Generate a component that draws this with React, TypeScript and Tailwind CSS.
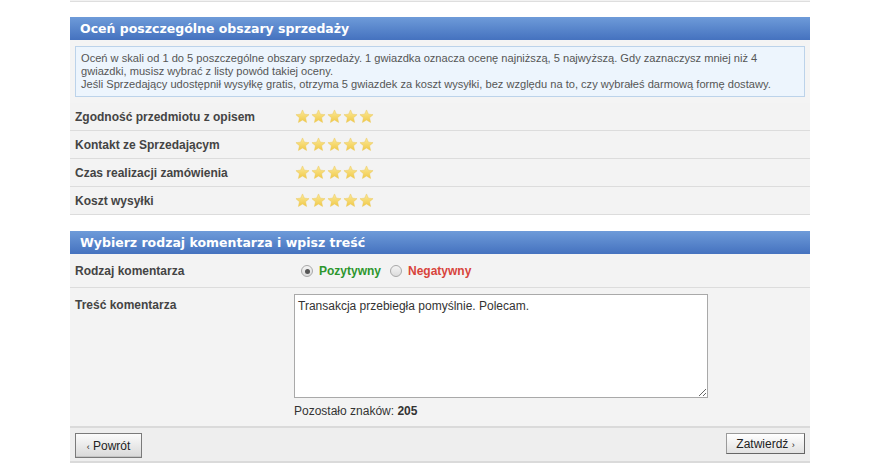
import React from 'react';

const criteria = [
  'Zgodność przedmiotu z opisem',
  'Kontakt ze Sprzedającym',
  'Czas realizacji zamówienia',
  'Koszt wysyłki',
];

function Star() {
  return (
    <svg width="15" height="15" viewBox="0 0 24 24" className="shrink-0">
      <defs>
        <linearGradient id="sg" x1="0" y1="0" x2="0" y2="1">
          <stop offset="0" stopColor="#fce99a" />
          <stop offset="1" stopColor="#f0c947" />
        </linearGradient>
      </defs>
      <polygon
        points="12,1.5 15.1,8.3 22.5,9 16.9,14 18.5,21.5 12,17.6 5.5,21.5 7.1,14 1.5,9 8.9,8.3"
        fill="url(#sg)"
        stroke="#ebc95a"
        strokeWidth="0.8"
      />
    </svg>
  );
}

function SectionHeader({ title }: { title: string }) {
  return (
    <div className="h-[23px] flex items-center px-[10px] pt-[1px] bg-gradient-to-b from-[#6e9bd9] to-[#4572bf] text-white font-bold text-[12.5px] [font-family:'DejaVu_Sans',Verdana,sans-serif]">
      {title}
    </div>
  );
}

function Radio({ checked, className = '' }: { checked?: boolean; className?: string }) {
  return (
    <span
      className={`inline-flex h-[12px] w-[12px] items-center justify-center rounded-full border border-[#a8a8a8] bg-gradient-to-b from-[#f4f4f4] to-[#dcdcdc] ${className}`}
    >
      {checked && <span className="h-[5px] w-[5px] rounded-full bg-[#555]" />}
    </span>
  );
}

export default function App() {
  return (
    <div className="min-h-[470px] bg-white [font-family:'Liberation_Sans',Arial,sans-serif]">
      <div className="w-[740px] ml-[70px]">
        <div className="h-[2px] bg-[#f2f2f2] border-b border-[#dedede]" />

        <div className="mt-[15px]">
          <SectionHeader title="Oceń poszczególne obszary sprzedaży" />
          <div className="bg-[#f4f4f4] px-[5px] py-[6px]">
            <div className="border border-[#bcd3ea] bg-[#edf5fd] px-[5px] py-[5px] text-[11.1px] leading-[13px] text-[#555]">
              Oceń w skali od 1 do 5 poszczególne obszary sprzedaży. 1 gwiazdka oznacza ocenę najniższą, 5 najwyższą. Gdy zaznaczysz mniej niż 4 gwiazdki, musisz wybrać z listy powód takiej oceny.
              <br />
              Jeśli Sprzedający udostępnił wysyłkę gratis, otrzyma 5 gwiazdek za koszt wysyłki, bez względu na to, czy wybrałeś darmową formę dostawy.
            </div>
          </div>
          {criteria.map((c) => (
            <div key={c} className="flex h-[28px] items-center border-b border-[#dcdcdc] bg-[#f3f3f3] pl-[5px]">
              <div className="w-[220px] text-[12px] font-bold text-[#444]">{c}</div>
              <div className="flex gap-[1px]">
                {[0, 1, 2, 3, 4].map((i) => (
                  <Star key={i} />
                ))}
              </div>
            </div>
          ))}
        </div>

        <div className="mt-[16px]">
          <SectionHeader title="Wybierz rodzaj komentarza i wpisz treść" />
          <div className="flex h-[34px] border-b border-[#dcdcdc] bg-[#f3f3f3] pl-[5px] pt-[8px]">
            <div className="w-[219px] text-[12px] font-bold text-[#444]">Rodzaj komentarza</div>
            <div className="flex items-center pl-[7px] pt-[2px] h-[16px] text-[12px] font-bold">
              <Radio checked />
              <span className="ml-[6px] text-[#2d962d]">Pozytywny</span>
              <Radio className="ml-[9px]" />
              <span className="ml-[6px] text-[#d8443b]">Negatywny</span>
            </div>
          </div>
          <div className="flex bg-[#f3f3f3] pl-[5px] pt-[6px] pb-[6px]">
            <div className="w-[219px] pt-[2px] text-[12px] font-bold text-[#444]">Treść komentarza</div>
            <div>
              <textarea
                className="block h-[104px] w-[414px] resize-y border border-[#a9a9a9] bg-white px-[3px] py-[2px] text-[12px] text-[#333] outline-none [font-family:'Liberation_Sans',Arial,sans-serif]"
                defaultValue="Transakcja przebiegła pomyślnie. Polecam."
              />
              <div className="mt-[4px] text-[12px] text-[#333]">
                Pozostało znaków: <b>205</b>
              </div>
            </div>
          </div>
          <div className="flex h-[37px] items-start justify-between border-t-2 border-b-2 border-[#dadada] bg-[#eeeeee] px-[5px] pt-[5px]">
            <button className="h-[25px] w-[67px] border border-[#7a7a7a] bg-gradient-to-b from-[#fbfbfb] to-[#d9d9d9] text-[12px] text-[#222] shadow-[inset_0_-1px_0_#c4c4c4]">
              <span className="text-[9px]">‹</span> Powrót
            </button>
            <button className="h-[21px] w-[79px] border border-[#9a9a9a] border-r-[#666] border-b-[#666] bg-gradient-to-b from-[#ffffff] to-[#e2e2e2] text-[12px] text-[#222]">
              Zatwierdź <span className="text-[9px]">›</span>
            </button>
          </div>
        </div>
      </div>
    </div>
  );
}
